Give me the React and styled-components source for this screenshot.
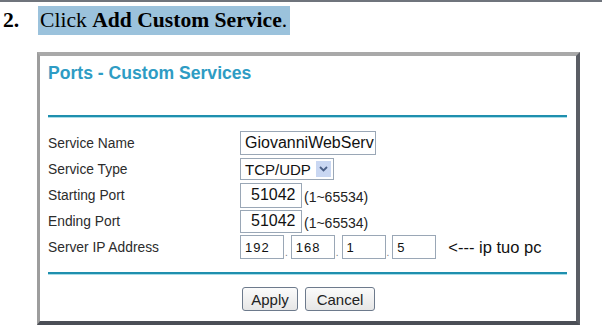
import styled, { createGlobalStyle } from 'styled-components';

const Global = createGlobalStyle`
    body {
        margin: 0;
        background: #ffffff;
        font-family: "Liberation Sans", Arial, sans-serif;
    }
`;

const Page = styled.div`
    width: 602px;
    height: 329px;
    overflow: hidden;
    border-top: 2px solid #6f747c;
    box-sizing: border-box;
`;

const Step = styled.div`
    display: flex;
    align-items: center;
    height: 29px;
    margin-top: 4px;
    font-family: "Liberation Serif", "Times New Roman", serif;
    font-size: 21.6px;
    color: #000;
`;

const StepNum = styled.span`
    font-weight: bold;
    width: 38px;
    padding-left: 3px;
    box-sizing: border-box;
`;

const Highlight = styled.span`
    background: #9bc2dc;
    height: 29px;
    line-height: 29px;
    padding: 0 3px 0 2px;
    b { font-weight: bold; }
`;

const Panel = styled.div`
    margin: 17px 0 0 37px;
    width: 543px;
    height: 273px;
    box-sizing: border-box;
    background: #fff;
    border-top: 4px solid #a9a9a9;
    border-left: 3px solid #9d9d9d;
    border-right: 4px solid #5a5d64;
    border-bottom: 4px solid #4b4e56;
    padding: 7px 9px 0 8px;
    display: flex;
    flex-direction: column;
`;

const Title = styled.div`
    font-size: 17.6px;
    font-weight: bold;
    color: #2e9cc4;
    line-height: 20px;
`;

const Rule = styled.div`
    height: 2px;
    flex-shrink: 0;
    background: #1f8fae;
    box-shadow: 0 1px 0 #a9dde8;
    margin-top: ${p => p.$top}px;
`;

const Form = styled.div`
    display: grid;
    grid-template-columns: 192px 1fr;
    grid-auto-rows: 26px;
    margin-top: 13px;
    align-items: center;
`;

const Label = styled.div`
    font-size: 13.8px;
    color: #2c2c2c;
`;

const Field = styled.div`
    display: flex;
    align-items: center;
    gap: ${p => p.$gap || 2}px;
`;

const Input = styled.div`
    box-sizing: border-box;
    width: ${p => p.$w}px;
    height: ${p => p.$h || 24}px;
    border: 1px solid #9aa7b6;
    background: #fff;
    font-size: ${p => p.$size || 16}px;
    color: #111;
    display: flex;
    align-items: center;
    padding-left: ${p => p.$pad || 4}px;
    letter-spacing: ${p => p.$ls || 0}px;
    white-space: nowrap;
    overflow: hidden;
`;

const Select = styled.div`
    box-sizing: border-box;
    width: 94px;
    height: 22px;
    border: 1px solid #9aa7b6;
    display: flex;
    align-items: center;
    justify-content: space-between;
    padding: 0 2px 0 4px;
    font-size: 15px;
    color: #111;
`;

const Arrow = styled.span`
    width: 15px;
    height: 16px;
    background: #c9d7f2;
    display: flex;
    align-items: center;
    justify-content: center;
`;

const Hint = styled.span`
    font-size: 14px;
    color: #222;
    margin-top: 4px;
`;

const Dot = styled.span`
    font-size: 10px;
    color: #777;
    align-self: flex-end;
    margin-bottom: 1px;
`;

const Note = styled.span`
    font-size: 16.5px;
    color: #111;
    margin-left: 11px;
`;

const Buttons = styled.div`
    display: flex;
    gap: 7px;
    margin: 13px 0 0 194px;
`;

const Button = styled.div`
    box-sizing: border-box;
    width: ${p => p.$w}px;
    height: 24px;
    border: 1px solid #6d7a8c;
    border-radius: 3px;
    background: linear-gradient(#fbfbfb, #e6e6e6);
    font-size: 15px;
    color: #222;
    display: flex;
    align-items: center;
    justify-content: center;
`;

const App = () => {
    const ip = ['192', '168', '1', '5'];
    return (
        <Page>
            <Global />
            <Step>
                <StepNum>2.</StepNum>
                <Highlight>Click <b>Add Custom Service</b>.</Highlight>
            </Step>
            <Panel>
                <Title>Ports - Custom Services</Title>
                <Rule $top={32} />
                <Form>
                    <Label>Service Name</Label>
                    <Field><Input $w={136} $h={24}>GiovanniWebServ</Input></Field>

                    <Label>Service Type</Label>
                    <Field>
                        <Select>
                            TCP/UDP
                            <Arrow>
                                <svg width="9" height="6" viewBox="0 0 9 6">
                                    <path d="M1 1 L4.5 4.5 L8 1" fill="none" stroke="#4a5f86" strokeWidth="1.8" />
                                </svg>
                            </Arrow>
                        </Select>
                    </Field>

                    <Label>Starting Port</Label>
                    <Field>
                        <Input $w={62} $h={25} $pad={10}>51042</Input>
                        <Hint>(1~65534)</Hint>
                    </Field>

                    <Label>Ending Port</Label>
                    <Field>
                        <Input $w={62} $h={23} $pad={10}>51042</Input>
                        <Hint>(1~65534)</Hint>
                    </Field>

                    <Label>Server IP Address</Label>
                    <Field $gap={1}>
                        {ip.map((v, i) => (
                            <Field key={i} $gap={3}>
                                {i > 0 && <Dot>.</Dot>}
                                <Input $w={44} $h={24} $size={13} $pad={4} $ls={1}>{v}</Input>
                            </Field>
                        ))}
                        <Note>&lt;--- ip tuo pc</Note>
                    </Field>
                </Form>
                <Rule $top={12} />
                <Buttons>
                    <Button $w={56}>Apply</Button>
                    <Button $w={70}>Cancel</Button>
                </Buttons>
            </Panel>
        </Page>
    );
};

export default App;
